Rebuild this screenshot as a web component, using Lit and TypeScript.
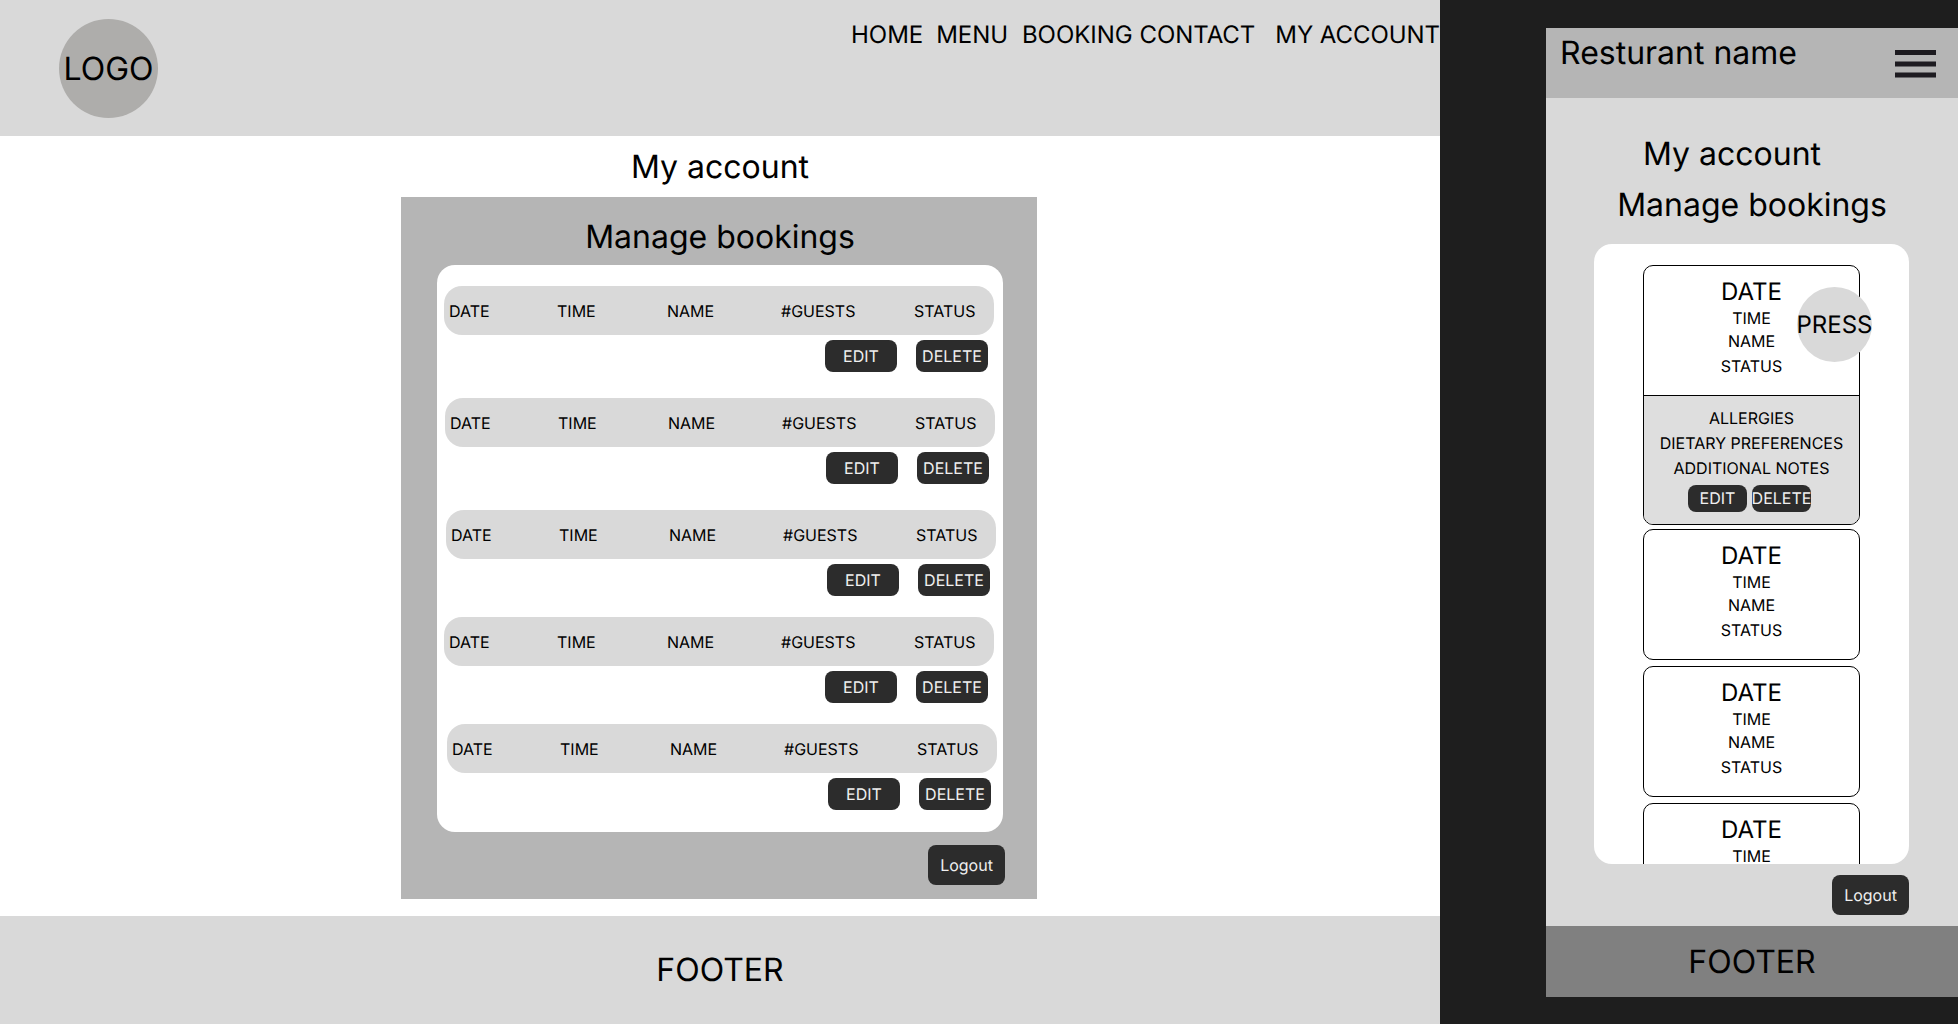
import { LitElement, html, css } from "lit";
import { customElement } from "lit/decorators.js";

const ROWS = [
  { left: 7, top: 21 },
  { left: 8, top: 26 },
  { left: 9, top: 26 },
  { left: 7, top: 21 },
  { left: 10, top: 21 },
];

@customElement("app-root")
export class AppRoot extends LitElement {
  static styles = css`
    :host {
      display: flex;
      width: 1958px;
      height: 1024px;
      overflow: hidden;
      background: #1e1e1e;
      color: #000;
      font-family: Inter, "Liberation Sans", sans-serif;
      font-weight: 390;
      text-rendering: geometricPrecision;
    }
    * { box-sizing: border-box; }
    .desktop {
      width: 1440px;
      flex: none;
      height: 1024px;
      background: #fff;
      display: flex;
      flex-direction: column;
      font-weight: 380;
    }
    .top {
      height: 136px;
      flex: none;
      background: #d9d9d9;
      display: flex;
      justify-content: space-between;
      align-items: flex-start;
    }
    .logo {
      width: 99px;
      height: 99px;
      margin: 19px 0 0 59px;
      border-radius: 50%;
      background: #aeadab;
      display: flex;
      align-items: center;
      justify-content: center;
      font-size: 32px;
      white-space: nowrap;
    }
    .nav {
      display: flex;
      font-size: 24px;
      line-height: 29px;
      letter-spacing: -0.06px;
      padding-top: 20px;
      white-space: nowrap;
    }
    .nav .g13 { margin-left: 13px; }
    .nav .g14 { margin-left: 14px; }
    .nav .g7 { margin-left: 7px; }
    .nav .g20 { margin-left: 20px; }
    .h {
      font-size: 32px;
      line-height: 39px;
      font-weight: inherit;
      margin: 0;
      white-space: nowrap;
    }
    .dh {
      height: 60px;
      margin-bottom: 1px;
      flex: none;
      display: flex;
      align-items: center;
      justify-content: center;
    }
    .panel {
      width: 636px;
      height: 702px;
      flex: none;
      margin-left: 401px;
      background: #b5b5b5;
      display: flex;
      flex-direction: column;
    }
    .panel .h {
      height: 68px;
      padding: 20px 0 0 2px;
      text-align: center;
    }
    .list {
      width: 566px;
      height: 567px;
      flex: none;
      margin-left: 36px;
      background: #fff;
      border-radius: 18px;
      overflow: hidden;
    }
    .row { width: 550px; }
    .cells {
      height: 49px;
      background: #d9d9d9;
      border-radius: 18px;
      display: grid;
      grid-template-columns: 108px 110px 114px 133px auto;
      align-items: center;
      padding: 1px 0 0 5px;
      font-size: 16px;
      line-height: 20px;
      white-space: nowrap;
    }
    .actions {
      display: flex;
      justify-content: flex-end;
      gap: 19px;
      margin-top: 5px;
      padding-right: 6px;
    }
    .btn {
      background: #2c2c2c;
      color: #f0f0f0;
      border-radius: 8px;
      display: flex;
      align-items: center;
      justify-content: center;
      font-size: 16px;
      white-space: nowrap;
      flex: none;
    }
    .actions .btn { width: 72px; height: 32px; }
    .logout { width: 77px; height: 40px; align-self: flex-end; }
    .panel .logout { margin: 13px 32px 0 0; }
    .dfoot {
      margin-top: auto;
      height: 108px;
      flex: none;
      background: #d9d9d9;
      display: flex;
      align-items: center;
      justify-content: center;
      padding-bottom: 1px;
      font-size: 32px;
    }
    .gutter { width: 106px; flex: none; }
    .mobile {
      width: 412px;
      flex: none;
      height: 969px;
      margin-top: 28px;
      display: flex;
      flex-direction: column;
      background: #d9d9d9;
    }
    .mtop {
      height: 70px;
      flex: none;
      background: #b5b5b5;
      display: flex;
      justify-content: space-between;
      align-items: flex-start;
      padding: 5px 22px 0 14px;
    }
    .burger { margin-top: 17px; display: block; }
    .mmain {
      height: 828px;
      flex: none;
      display: flex;
      flex-direction: column;
    }
    .mh1 { margin-top: 36px; text-align: center; padding-right: 40px; }
    .mh2 { margin-top: 12px; text-align: center; }
    .mlist {
      width: 315px;
      height: 620px;
      flex: none;
      margin: 20px 0 0 48px;
      background: #fff;
      border-radius: 18px;
      overflow: hidden;
      padding: 21px 0 0 49px;
    }
    .card {
      position: relative;
      width: 217px;
      border: 1px solid #000;
      border-radius: 10px;
      margin-bottom: 6px;
      text-align: center;
      font-size: 16px;
      line-height: 24px;
    }
    .card.first { margin-bottom: 4px; }
    .summary { height: 129px; padding-top: 11px; }
    .date { font-size: 24px; line-height: 29px; }
    .name { margin-top: -1px; }
    .status { margin-top: 1px; }
    .press {
      position: absolute;
      left: 153px;
      top: 21px;
      width: 75px;
      height: 75px;
      border-radius: 50%;
      background: #d9d9d9;
      display: flex;
      align-items: center;
      justify-content: center;
      font-size: 24px;
      white-space: nowrap;
    }
    .detail {
      border-top: 1px solid #000;
      background: #dedede;
      border-radius: 0 0 9px 9px;
      height: 129px;
      padding-top: 10px;
      line-height: 25px;
    }
    .dactions {
      display: flex;
      justify-content: center;
      gap: 5px;
      margin-top: 4px;
      padding-right: 4px;
    }
    .dactions .btn { width: 59px; height: 27px; }
    .mmain .logout { margin: 11px 49px 0 0; }
    .mfoot {
      height: 71px;
      flex: none;
      background: #808080;
      display: flex;
      align-items: center;
      justify-content: center;
      font-size: 32px;
    }
  `;

  private renderSummary() {
    return html`<div class="summary">
      <div class="date">DATE</div>
      <div>TIME</div>
      <div class="name">NAME</div>
      <div class="status">STATUS</div>
    </div>`;
  }

  render() {
    return html`
      <section class="desktop">
        <header class="top">
          <div class="logo">LOGO</div>
          <nav class="nav">
            <span>HOME</span>
            <span class="g13">MENU</span>
            <span class="g14">BOOKING</span>
            <span class="g7">CONTACT</span>
            <span class="g20">MY ACCOUNT</span>
          </nav>
        </header>
        <div class="dh"><h1 class="h">My account</h1></div>
        <div class="panel">
          <h2 class="h">Manage bookings</h2>
          <div class="list">
            ${ROWS.map(
              (r) => html`<div class="row" style="margin:${r.top}px 0 0 ${r.left}px">
                <div class="cells">
                  <span>DATE</span><span>TIME</span><span>NAME</span><span>#GUESTS</span><span>STATUS</span>
                </div>
                <div class="actions">
                  <div class="btn">EDIT</div>
                  <div class="btn">DELETE</div>
                </div>
              </div>`
            )}
          </div>
          <div class="btn logout">Logout</div>
        </div>
        <footer class="dfoot">FOOTER</footer>
      </section>
      <div class="gutter"></div>
      <section class="mobile">
        <header class="mtop">
          <div class="h">Resturant name</div>
          <svg class="burger" width="41" height="28" viewBox="0 0 41 28" fill="#1d1b20">
            <rect x="0" y="0" width="41" height="5"></rect>
            <rect x="0" y="11.5" width="41" height="5"></rect>
            <rect x="0" y="22.5" width="41" height="5"></rect>
          </svg>
        </header>
        <div class="mmain">
          <h1 class="h mh1">My account</h1>
          <h2 class="h mh2">Manage bookings</h2>
          <div class="mlist">
            <div class="card first">
              ${this.renderSummary()}
              <div class="press">PRESS</div>
              <div class="detail">
                <div>ALLERGIES</div>
                <div>DIETARY PREFERENCES</div>
                <div>ADDITIONAL NOTES</div>
                <div class="dactions">
                  <div class="btn">EDIT</div>
                  <div class="btn">DELETE</div>
                </div>
              </div>
            </div>
            <div class="card">${this.renderSummary()}</div>
            <div class="card">${this.renderSummary()}</div>
            <div class="card">${this.renderSummary()}</div>
          </div>
          <div class="btn logout">Logout</div>
        </div>
        <footer class="mfoot">FOOTER</footer>
      </section>
    `;
  }
}
